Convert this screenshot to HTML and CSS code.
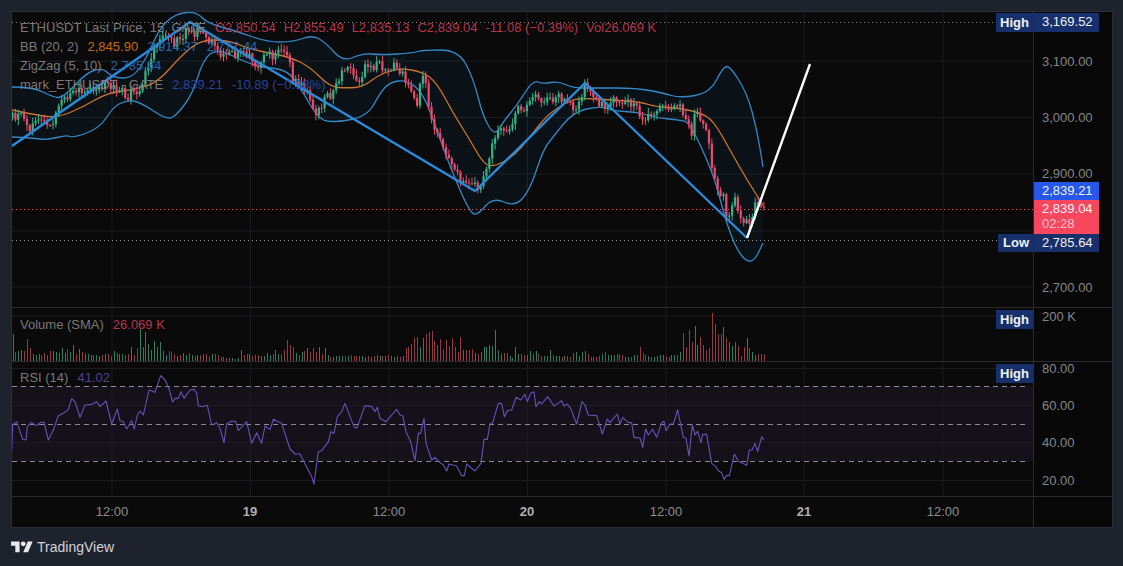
FILE: index.html
```html
<!DOCTYPE html>
<html lang="en">
<head>
<meta charset="utf-8">
<title>ETHUSDT chart</title>
<link rel="stylesheet" href="styles.css">
</head>
<body>
<main class="chart">
  <section class="pane pane-main">
    <div class="plot">
      <svg id="main" class="layer" viewBox="12 12 1021 295" width="1021" height="295"></svg>
      <div class="legend">
        <div class="row row-ohlc"><span>ETHUSDT Last Price, 15, GATE</span><span class="red o">O2,850.54</span><span class="red">H2,855.49</span><span class="red">L2,835.13</span><span class="red">C2,839.04</span><span class="red">-11.08 (−0.39%)</span><span class="red">Vol26.069 K</span></div>
        <div class="row"><span>BB (20, 2)</span><span class="orange">2,845.90</span><span class="blue">2,914.37</span><span class="blue">2,777.44</span></div>
        <div class="row"><span>ZigZag (5, 10)</span><span class="blue">2,785.64</span></div>
        <div class="row"><span>mark_ETHUSDT - GATE</span><span class="navy">2,839.21</span><span class="navy">-10.89 (−0.38%)</span></div>
      </div>
      <span class="tag tag-high">High</span>
      <span class="tag tag-low">Low</span>
    </div>
    <div class="axis">
      <span class="price tick-hi tagged">3,169.52</span>
      <span class="price tick-3100">3,100.00</span>
      <span class="price tick-3000">3,000.00</span>
      <span class="price tick-2900">2,900.00</span>
      <span class="price tick-mark">2,839.21</span>
      <span class="price tick-last">2,839.04<br><small>02:28</small></span>
      <span class="price tick-lo tagged">2,785.64</span>
      <span class="price tick-2700">2,700.00</span>
    </div>
  </section>
  <section class="pane pane-vol">
    <div class="plot">
      <svg id="vol" class="layer" viewBox="12 308 1021 53" width="1021" height="53"></svg>
      <div class="legend legend-vol"><div class="row"><span>Volume (SMA)</span><span class="red">26.069 K</span></div></div>
      <span class="tag tag-sub">High</span>
    </div>
    <div class="axis"><span class="price tick-200k">200 K</span></div>
  </section>
  <section class="pane pane-rsi">
    <div class="plot">
      <svg id="rsi" class="layer" viewBox="12 362 1021 134" width="1021" height="134"></svg>
      <div class="legend legend-rsi"><div class="row"><span>RSI (14)</span><span class="violet">41.02</span></div></div>
      <span class="tag tag-sub">High</span>
    </div>
    <div class="axis">
      <span class="price tick-80">80.00</span>
      <span class="price tick-60">60.00</span>
      <span class="price tick-40">40.00</span>
      <span class="price tick-20">20.00</span>
    </div>
  </section>
  <section class="pane pane-time">
    <div class="times">
      <span class="time t1">12:00</span>
      <span class="time day t2">19</span>
      <span class="time t3">12:00</span>
      <span class="time day t4">20</span>
      <span class="time t5">12:00</span>
      <span class="time day t6">21</span>
      <span class="time t7">12:00</span>
    </div>
    <div class="axis"></div>
  </section>
</main>
<footer class="brand">
  <svg class="logo" viewBox="0 0 36 28" width="22" height="17" aria-hidden="true"><path d="M14 22H7V11H0V4h14v18zM28 22h-8l7.5-18h8L28 22z"/><circle cx="20" cy="8" r="4"/></svg>
  <span>TradingView</span>
</footer>
<script src="chart.js"></script>
</body>
</html>
```

FILE: styles.css
```css
* { box-sizing: border-box; }
html, body { margin: 0; height: 566px; overflow: hidden; }
body {
  background: #1e222d;
  font-family: "Liberation Sans", Arial, sans-serif;
  font-size: 13px;
  color: #858585;
  padding: 11px 11px 0;
}
.chart {
  width: 1102px;
  height: 517px;
  background: #0a0a0a;
  border: 1px solid #2a2e39;
  display: flex;
  flex-direction: column;
}
.pane { display: grid; grid-template-columns: 1021px 1fr; border-bottom: 1px solid #2b2b2e; }
.pane-main { height: 296px; }
.pane-vol { height: 54px; }
.pane-rsi { height: 135px; }
.pane-time { flex: 1; border-bottom: 0; }
.plot { position: relative; overflow: hidden; }
.axis { position: relative; border-left: 1px solid #2b2b2e; background: #080808; }
.layer { position: absolute; left: 0; top: 0; display: block; }

.legend { position: absolute; left: 8px; top: 6px; line-height: 19px; white-space: nowrap; }
.legend-vol { top: 7px; }
.legend-rsi { top: 6px; }
.row { display: flex; gap: 9px; }
.row span { opacity: .9; }
.row-ohlc .red { margin-left: -1px; }
.row-ohlc .o { margin-left: 0; }
.red { color: #c83a54; }
.orange { color: #d9731a; }
.blue { color: #2a6fb5; }
.navy { color: #2b49b0; }
.violet { color: #5d46a0; }

.tag {
  position: absolute;
  right: 0;
  height: 19px;
  line-height: 19px;
  padding: 0 4px;
  background: #17306b;
  color: #eef1f6;
  font-weight: 700;
  font-size: 13px;
}
.tag-high { top: 1px; width: 37px; }
.tag-low { top: 222px; width: 35px; padding-left: 5px; height: 18px; line-height: 18px; }
.tag-sub { top: 2px; width: 37px; }

.price { position: absolute; left: 8px; line-height: 19px; white-space: nowrap; }
.tagged, .tick-mark, .tick-last {
  left: 0;
  width: 65px;
  padding-left: 8px;
  color: #eef1f6;
}
.tagged { background: #17306b; height: 19px; }
.tick-hi { top: 1px; line-height: 18px; }
.tick-3100 { top: 40px; }
.tick-3000 { top: 96px; }
.tick-2900 { top: 152px; }
.tick-mark { top: 170px; height: 18px; line-height: 18px; background: #2657e6; }
.tick-last { top: 188px; height: 34px; line-height: 15px; padding-top: 1px; background: #f7475f; }
.tick-last small { font-size: 13px; color: #ffc0c8; }
.tick-lo { top: 222px; height: 18px; line-height: 17px; }
.tick-2700 { top: 266px; }
.tick-200k { top: -1px; }
.tick-80 { top: -3px; }
.tick-60 { top: 34px; }
.tick-40 { top: 71px; }
.tick-20 { top: 109px; }

.times { position: relative; }
.time { position: absolute; top: 5px; line-height: 19px; transform: translateX(-50%); color: #8c8c8c; font-size: 13px; }
.day { color: #b0b0b0; font-weight: 700; }
.t1 { left: 100px; }
.t2 { left: 238px; }
.t3 { left: 377px; }
.t4 { left: 515px; }
.t5 { left: 654px; }
.t6 { left: 792px; }
.t7 { left: 931px; }

.brand {
  display: flex;
  align-items: center;
  gap: 4px;
  height: 38px;
  color: #d1d4dc;
  font-size: 14px;
}
.logo { fill: #e6e8ee; display: block; }
```

FILE: chart.js
```js
const NS = 'http://www.w3.org/2000/svg';
const GRID = '#1a1b1e';
const VX = [112, 250.5, 389, 527.5, 666, 804, 943];
const STEP = 2.89, X0 = 12.5, COUNT = 261;

function add(svg, name, attrs) {
  const el = document.createElementNS(NS, name);
  for (const k in attrs) el.setAttribute(k, attrs[k]);
  svg.appendChild(el);
  return el;
}
function pts(a) { let s = ''; for (let i = 0; i < a.length; i += 2) s += a[i] + ',' + a[i + 1] + ' '; return s; }
function line(svg, x1, y1, x2, y2, stroke, extra) { return add(svg, 'line', Object.assign({ x1, y1, x2, y2, stroke }, extra || {})); }
function poly(svg, a, stroke, w) { return add(svg, 'polyline', { points: pts(a), fill: 'none', stroke, 'stroke-width': w, 'stroke-linejoin': 'round' }); }
function smoothSegs(a) {
  let d = '';
  for (let i = 2; i < a.length - 2; i += 2) {
    d += ' Q' + a[i] + ' ' + a[i + 1] + ' ' + (a[i] + a[i + 2]) / 2 + ' ' + (a[i + 1] + a[i + 3]) / 2;
  }
  return d + ' L' + a[a.length - 2] + ' ' + a[a.length - 1];
}
function curve(svg, a, stroke, w) {
  add(svg, 'path', { d: 'M' + a[0] + ' ' + a[1] + smoothSegs(a), fill: 'none', stroke, 'stroke-width': w });
}
function interp(a, x) {
  if (x <= a[0]) return a[1];
  for (let i = 2; i < a.length; i += 2) {
    if (x <= a[i]) return a[i - 1] + (a[i + 1] - a[i - 1]) * (x - a[i - 2]) / (a[i] - a[i - 2]);
  }
  return a[a.length - 1];
}
let seed = 20240;
function rnd() { seed = (seed * 1664525 + 1013904223) % 4294967296; return seed / 4294967296; }
function vgrid(svg, top, bottom) { VX.forEach(x => line(svg, x, top, x, bottom, GRID)); }
function hgrid(svg, ys) { ys.forEach(y => line(svg, 12, y, 1033, y, GRID)); }

const CLOSE = [12,118, 20,112, 28,130, 35,125, 45,118, 50,130, 60,107, 73,90, 83,93, 100,85, 113,90, 127,95, 137,93, 147,70, 160,37, 173,43, 190,30, 200,33, 217,50, 227,58, 240,50, 257,63, 277,53, 287,57, 293,77, 307,90, 317,117, 320,107, 333,90, 347,67, 358,83, 367,63, 380,67, 397,67, 410,83, 417,103, 423,70, 430,110, 437,133, 447,157, 460,180, 475,188, 485,178, 488,160, 497,127, 507,137, 517,113, 530,100, 547,97, 560,97, 577,107, 585,87, 600,103, 607,108, 617,100, 633,105, 643,118, 663,108, 680,100, 685,117, 692,133, 695,113, 708,130, 713,177, 723,197, 727,220, 735,200, 740,217, 748,225, 757,203, 765,207];
const UPPER = [12,87, 33,87, 53,97, 63,98, 87,72, 103,68, 113,78, 133,78, 147,57, 160,27, 177,13, 197,12, 207,23, 233,30, 267,42, 293,42, 312,35, 325,42, 343,62, 363,53, 380,55, 413,53, 423,50, 458,50, 473,77, 483,117, 495,136, 503,122, 517,105, 533,80, 543,84, 558,81, 573,88, 593,88, 637,88, 663,93, 680,98, 710,93, 723,67, 730,66, 747,93, 757,130, 763,167];
const LOWER = [12,137, 33,138, 47,140, 67,135, 73,138, 100,128, 113,107, 127,100, 140,102, 167,120, 177,115, 193,93, 203,60, 217,48, 247,63, 263,67, 287,70, 300,87, 317,117, 330,123, 367,117, 380,93, 390,82, 407,80, 423,93, 437,130, 450,167, 470,213, 478,215, 493,197, 515,207, 530,190, 543,150, 553,137, 573,112, 600,106, 613,111, 637,112, 657,118, 680,120, 690,123, 713,173, 723,210, 728,227, 737,250, 747,262, 755,260, 763,243];
const BASIS = [12,110, 30,114, 57,118, 83,107, 107,93, 133,90, 157,83, 180,57, 200,40, 227,40, 253,50, 290,57, 310,67, 330,87, 347,88, 363,87, 380,74, 400,68, 423,72, 437,83, 453,113, 470,140, 483,163, 493,167, 513,157, 530,137, 547,115, 567,102, 580,98, 613,100, 640,102, 657,107, 680,108, 700,113, 713,120, 730,150, 747,180, 763,205];

const main = document.getElementById('main');
hgrid(main, [61, 117.5, 174, 231, 287]);
vgrid(main, 12, 307);

const reversed = [];
for (let i = LOWER.length - 2; i >= 0; i -= 2) reversed.push(LOWER[i], LOWER[i + 1]);
add(main, 'path', { d: 'M' + UPPER[0] + ' ' + UPPER[1] + smoothSegs(UPPER) + ' L' + reversed[0] + ' ' + reversed[1] + smoothSegs(reversed) + ' Z', fill: '#2196f3', 'fill-opacity': '.06' });

line(main, 12, 22.5, 995, 22.5, '#858585', { 'stroke-dasharray': '1 3' });
line(main, 12, 240.5, 997, 240.5, '#9a9a9a', { 'stroke-dasharray': '1 3' });
line(main, 12, 209.5, 1033, 209.5, '#f0506e', { 'stroke-dasharray': '1 3' });

curve(main, UPPER, '#3488c8', 1.3);
curve(main, LOWER, '#3488c8', 1.3);
curve(main, BASIS, '#cf7428', 1.3);

const dirs = [];
let prev = 118;
for (let i = 0; i < COUNT; i++) {
  const x = X0 + i * STEP;
  const c = interp(CLOSE, x) + (rnd() - .5) * 11;
  const up = c < prev;
  dirs.push(up);
  const color = up ? '#35b386' : '#ea4a6c';
  const top = Math.min(prev, c), bot = Math.max(prev, c);
  line(main, x, top - 1 - rnd() * 5, x, bot + 1 + rnd() * 5, color, { 'stroke-width': 1 });
  add(main, 'rect', { x: x - 1.1, y: top, width: 2.2, height: Math.max(bot - top, 1), fill: color });
  prev = c;
}

poly(main, [12,146, 190,22, 475,191, 585,83, 747,238], '#2a8bdc', 2.4);
poly(main, [747,238, 810,64], '#ffffff', 2.4);

const vol = document.getElementById('vol');
hgrid(vol, [316]);
vgrid(vol, 308, 361);
const HEIGHTS = [27,9,10,11,10,22,13,7,6,7,6,8,6,10,10,9,8,13,8,12,9,16,7,12,9,7,7,6,6,6,5,6,7,7,5,10,8,7,7,6,7,14,6,13,32,14,29,17,11,20,14,19,10,6,10,9,7,5,6,8,6,8,6,5,6,6,7,7,5,7,7,6,4,4,3,3,3,2,3,11,6,7,7,5,6,6,5,5,8,6,7,11,7,7,11,21,16,14,8,6,9,10,13,9,13,9,14,7,13,6,4,4,5,5,5,5,5,6,5,5,5,5,4,5,4,5,6,5,5,5,6,5,4,5,
  4,5,13,14,17,23,24,14,23,27,29,30,20,16,22,12,21,15,23,14,9,24,11,11,11,12,8,7,9,14,14,16,15,31,11,7,8,8,5,3,14,7,7,6,6,10,7,10,7,5,5,5,11,6,5,5,4,5,5,4,8,9,5,9,10,7,4,4,4,5,7,9,6,6,6,7,7,6,4,4,4,6,6,14,8,6,5,4,4,5,6,6,5,4,6,6,6,9,28,14,31,19,35,16,24,16,11,13,48,37,27,27,34,23,19,15,19,15,5,14,23,13,9,6,7,7,7];
HEIGHTS.forEach((h, i) => {
  if (i >= COUNT) return;
  const x = X0 + i * STEP;
  add(vol, 'rect', { x: Math.round(x), y: 361 - h, width: 1, height: h, fill: dirs[i] ? '#2f7d62' : '#94394a' });
});

const rsi = document.getElementById('rsi');
add(rsi, 'rect', { x: 12, y: 386, width: 1021, height: 75, fill: '#7e57c2', 'fill-opacity': '.09' });
hgrid(rsi, [368.5, 405.5, 442.5, 480.5]);
vgrid(rsi, 362, 496);
[386.5, 424.5, 461.5].forEach(y => line(rsi, 12, y, 1029, y, '#8d8a94', { 'stroke-dasharray': '5 4' }));
function scaled(a, ox, oy) { return a.map((v, i) => (i % 2 ? oy : ox) + v / 3); }
const RSI_A = [35,455,38,375,50,365,60,395,68,418,78,420,82,380,95,367,108,377,122,367,132,367,145,420,160,390,175,347,190,340,205,328,215,296,225,305,240,352,255,315,275,313,290,305,300,320,318,303,335,372,352,327,360,362,370,365,380,387,395,362,403,387,412,345,420,333,430,345,447,270,465,277,482,227,495,240,505,260,518,306,525,295,535,295,543,275,552,295,570,270,582,268,590,280,595,317,607,320,622,316,635,375,650,368,660,385,672,428,680,372,695,363,707,365,715,392,740,365,755,430,770,398,785,430,795,378,810,388,820,358,845,370,870,447,885,462,900,462,935,530,942,552,955,455,965,452,985,425,993,395,1002,400,1012,350,1025,335,1035,310,1062,380,1070,385,1095,317,1115,320,1125,335,1132,322,1140,355,1158,365,1190,328,1200,345];
const RSI_B = [8,347,18,395,32,425,45,482,55,400,62,400,72,355,78,430,95,480,105,472,120,488,130,495,140,513,147,492,170,498,185,527,193,527,200,492,225,513,243,490,252,418,262,418,270,372,278,368,295,310,305,310,313,350,322,332,335,330,348,292,362,300,375,283,382,305,392,280,402,275,408,320,418,305,425,312,443,290,462,318,485,302,492,318,502,312,512,325,530,372,546,305,555,315,565,345,590,347,607,402,622,357,630,368,652,342,660,373,668,352,685,368,695,368,702,412,720,414,728,442,737,387,745,405,758,388,770,412,785,368,792,364,798,392,810,372,820,372,833,330,850,412,858,415,867,468,877,375,885,405,893,394,903,428,908,403,920,403,935,490,948,500,955,512,965,518,972,538,980,527,988,527,1003,462,1015,484,1040,496,1048,450,1056,450,1065,430,1073,455,1085,410,1091,420];
poly(rsi, scaled(RSI_A, 0, 300).concat(scaled(RSI_B, 400, 300)), '#6a50b8', 1.1);
```
